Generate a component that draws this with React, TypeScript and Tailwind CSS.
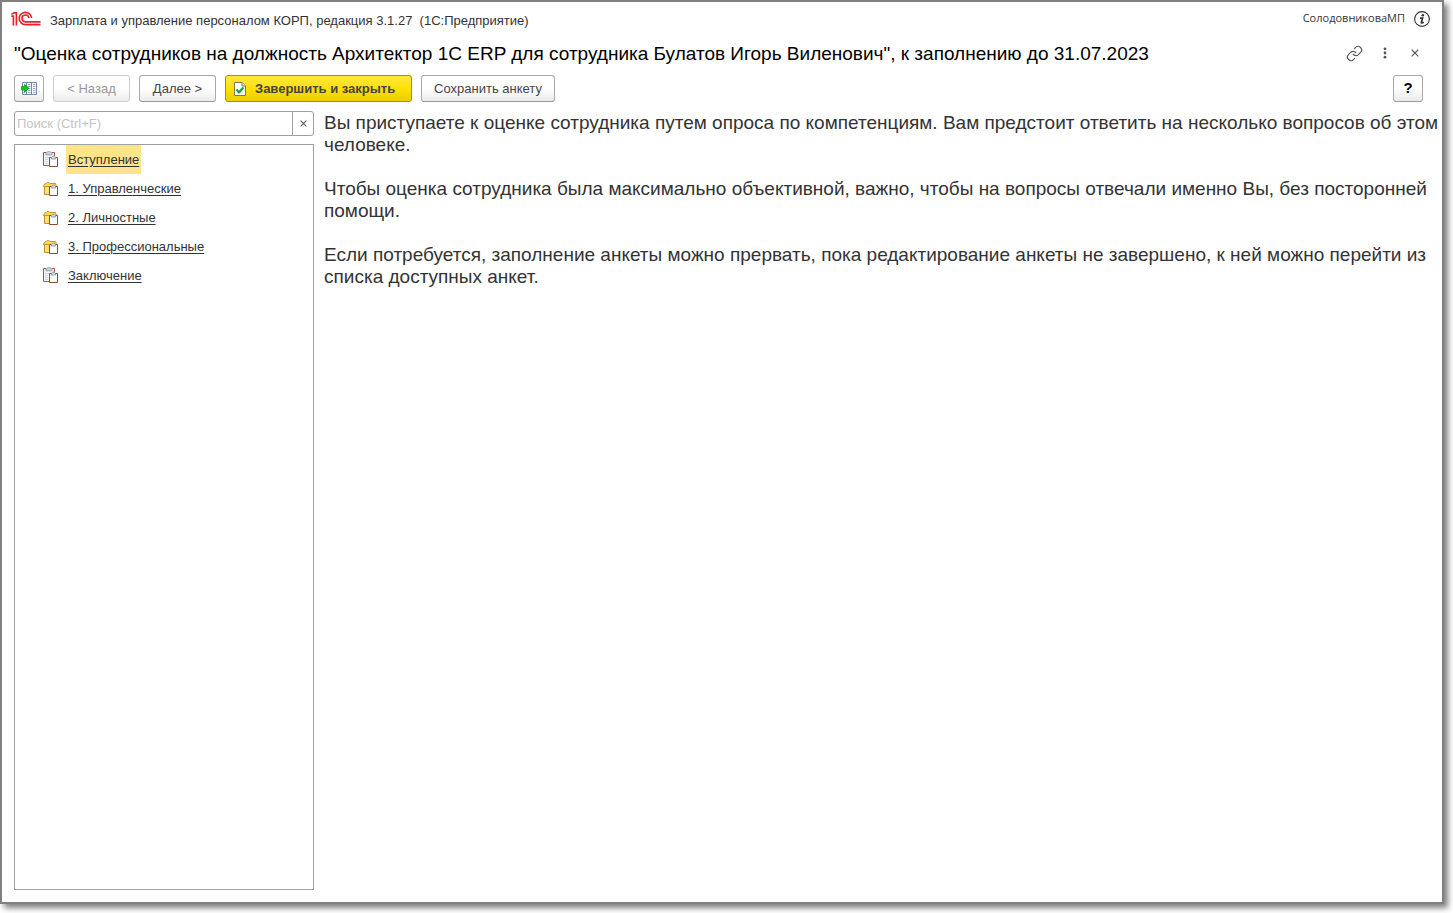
import React, { useState } from 'react';
import { Link } from 'lucide-react';

type SectionKind = 'page' | 'folder';

interface Section {
  id: string;
  title: string;
  kind: SectionKind;
}

const SECTIONS: Section[] = [
  { id: 'intro', title: 'Вступление', kind: 'page' },
  { id: 'management', title: '1. Управленческие', kind: 'folder' },
  { id: 'personal', title: '2. Личностные', kind: 'folder' },
  { id: 'professional', title: '3. Профессиональные', kind: 'folder' },
  { id: 'outro', title: 'Заключение', kind: 'page' },
];

const INTRO = [
  'Вы приступаете к оценке сотрудника путем опроса по компетенциям. Вам предстоит ответить на несколько вопросов об этом человеке.',
  'Чтобы оценка сотрудника была максимально объективной, важно, чтобы на вопросы отвечали именно Вы, без посторонней помощи.',
  'Если потребуется, заполнение анкеты можно прервать, пока редактирование анкеты не завершено, к ней можно перейти из списка доступных анкет.',
];

const Logo = () => (
  <svg width="30" height="16" viewBox="0 0 30 16" fill="none" stroke="#e8212b" strokeWidth="1.7">
    <path d="M0.4 5.2 H2.4 V14.6" />
    <path d="M0.4 3.4 L3 1.8 H5.4 V14.6" />
    <path d="M20.6 7 A6.2 6.2 0 1 0 14.4 13.7 H29.5" />
    <path d="M17.8 7 A3.4 3.4 0 1 0 14.4 10.8 H29.5" />
  </svg>
);

const InfoIcon = () => (
  <svg width="16" height="16" viewBox="0 0 16 16" fill="none" stroke="#333">
    <circle cx="8" cy="8" r="7.4" strokeWidth="1.1" />
    <circle cx="8.8" cy="4.3" r="1.3" fill="#333" stroke="none" />
    <path d="M6 7.2 H8.6 L7.3 11.6 Q7.3 12.3 9.8 11.2" strokeWidth="1.7" />
  </svg>
);

const MoreIcon = () => (
  <svg width="4" height="12" viewBox="0 0 4 12" fill="#555">
    <circle cx="2" cy="1.8" r="1.4" />
    <circle cx="2" cy="6" r="1.4" />
    <circle cx="2" cy="10.2" r="1.4" />
  </svg>
);

const CrossIcon = ({ size }: { size: number }) => (
  <svg width={size} height={size} viewBox="0 0 8 8" fill="none" stroke="#555" strokeWidth="1.2">
    <path d="M0.7 0.7 L7.3 7.3 M7.3 0.7 L0.7 7.3" />
  </svg>
);

const PanelIcon = () => (
  <svg width="16" height="13" viewBox="0 0 16 13" fill="none">
    <path d="M1.5 0.5 H15.5 V12.5 H1.5 Z" fill="#fff" stroke="#7389ab" />
    <path d="M5.5 0.5 V12.5 M10.5 0.5 V12.5" stroke="#7389ab" />
    <path d="M7 2.5 H9.5 M7 4.5 H9.5 M7 6.5 H9.5 M7 8.5 H9.5 M7 10.5 H9.5 M12 2.5 H14.5 M12 4.5 H14.5 M12 6.5 H14.5 M12 8.5 H14.5 M12 10.5 H14.5 M2.5 10.5 H4.5" stroke="#9aaac4" />
    <path d="M0.4 4.5 H3.5 V2.3 L8 6.2 L3.5 10.2 V8 H0.4 Z" fill="#14c814" stroke="#108a10" strokeWidth="0.7" />
  </svg>
);

const DoneIcon = () => (
  <svg width="12" height="15" viewBox="0 0 12 15" fill="none">
    <path d="M0.5 1.5 H8 L11.5 5 V14.5 H0.5 Z" fill="#fff" stroke="#77775c" />
    <path d="M8 1.5 V5 H11.5" fill="#e8e8e8" stroke="#77775c" />
    <path d="M2.5 8.5 L5 11.3 L9.5 6.5" stroke="#18a83c" strokeWidth="2.4" />
  </svg>
);

const PageIcon = () => (
  <svg width="16" height="17" viewBox="0 0 16 17" fill="none">
    <path d="M0.5 1.5 H11.5 V14.5 H0.5 Z" fill="#f4f5f8" />
    <path d="M0.5 14.5 V1.5 H3 M9 1.5 H11.5 V5" stroke="#a0503e" />
    <path d="M0.5 14.5 H6" stroke="#8a6a68" />
    <path d="M3 3.8 V2.2 L4.8 0.8 H7.2 L9 2.2 V3.8 Z" fill="#d5dce6" stroke="#7d8a9c" strokeWidth="0.8" />
    <path d="M2 6.5 H6 M2 8.5 H5 M2 10.5 H5 M2 12.5 H5" stroke="#d0d4da" />
    <path d="M6.5 6.5 H14.5 V15.5 H6.5 Z" fill="#fff" stroke="#8f4a2c" strokeLinejoin="round" />
    <path d="M8.4 8 V6.5 L9.6 5.2 H11.4 L12.6 6.5 V8 Z" fill="#d5dce6" stroke="#7d8a9c" strokeWidth="0.8" />
  </svg>
);

const FolderIcon = () => (
  <svg width="16" height="17" viewBox="0 0 16 17" fill="none">
    <path d="M1.5 6 H9 V14.5 H1.5 Z" fill="#ffe070" stroke="#c08c2c" />
    <path d="M0.5 6.5 L1.5 4 L3 3.5 Q3.5 2.5 5 2.5 Q6.5 2.5 7 3.5 H12.5 L13.5 6.5 Z" fill="#ffd65c" stroke="#c8963a" />
    <path d="M6.5 6.5 H14.5 V15.5 H6.5 Z" fill="#fff" stroke="#8f4a2c" strokeLinejoin="round" />
    <path d="M8.4 8 V6.5 L9.6 5.2 H11.4 L12.6 6.5 V8 Z" fill="#d5dce6" stroke="#7d8a9c" strokeWidth="0.8" />
  </svg>
);

const BUTTON =
  'flex h-[27px] items-center justify-center rounded-[3px] border border-[#aaa] border-b-[#999] bg-linear-to-b from-white from-50% to-[#ebebeb] text-[#444] disabled:border-[#ccc] disabled:text-[#999]';

export default function App() {
  const [active, setActive] = useState('intro');
  const [query, setQuery] = useState('');

  return (
    <div className="flex min-h-screen bg-white pr-[9px] pb-[9px] font-['Liberation_Sans',Arial,sans-serif] text-[13px] text-[#333]">
      <div className="flex min-w-0 flex-1 flex-col border-2 border-[#808080] bg-white shadow-[4px_4px_6px_#808080]">
        <header className="flex h-[34px] items-center pr-3 pl-[9px]">
          <Logo />
          <span className="ml-[9px] pt-1 whitespace-pre">Зарплата и управление персоналом КОРП, редакция 3.1.27  (1С:Предприятие)</span>
          <span className="ml-auto pb-[2px] font-['Open_Sans',sans-serif] text-[11px]">СолодовниковаМП</span>
          <button type="button" aria-label="О программе" className="ml-[9px]"><InfoIcon /></button>
        </header>

        <div className="flex h-[34px] items-center pr-[23px] pl-3">
          <h1 className="pt-[2px] text-[19px] text-black">"Оценка сотрудников на должность Архитектор 1С ERP для сотрудника Булатов Игорь Виленович", к заполнению до 31.07.2023</h1>
          <div className="ml-auto flex items-center">
            <button type="button" aria-label="Получить ссылку"><Link size={17} strokeWidth={1.6} color="#555" /></button>
            <button type="button" aria-label="Ещё" className="ml-5"><MoreIcon /></button>
            <button type="button" aria-label="Закрыть" className="ml-6"><CrossIcon size={8} /></button>
          </div>
        </div>

        <div className="flex gap-[9px] pt-[5px] pr-[19px] pl-3">
          <button type="button" aria-label="Разделы анкеты" className={`${BUTTON} w-[30px]`}><PanelIcon /></button>
          <button type="button" disabled className={`${BUTTON} w-[77px]`}>&lt; Назад</button>
          <button type="button" className={`${BUTTON} w-[77px]`}>Далее &gt;</button>
          <button type="button" className="flex h-[27px] w-[187px] items-center gap-[9px] rounded-[3px] border border-[#a89400] bg-linear-to-b from-[#ffe838] via-[#ffe100] to-[#ebce00] pl-2 font-bold text-[#444]">
            <DoneIcon />
            Завершить и закрыть
          </button>
          <button type="button" className={`${BUTTON} w-[134px]`}>Сохранить анкету</button>
          <button type="button" className={`${BUTTON} ml-auto w-[30px] text-[15px] font-bold text-black`}>?</button>
        </div>

        <div className="flex flex-1 gap-[10px] pt-[9px] pr-[2px] pb-3 pl-3">
          <aside className="flex w-[300px] shrink-0 flex-col gap-2">
            <div className="flex h-[25px] rounded-[3px] border border-[#a0a0a0]">
              <input
                type="text"
                aria-label="Поиск"
                value={query}
                onChange={(e) => setQuery(e.target.value)}
                placeholder="Поиск (Ctrl+F)"
                className="min-w-0 flex-1 px-[2px] outline-none placeholder:text-[#c4c4c4]"
              />
              <button type="button" aria-label="Очистить" onClick={() => setQuery('')} className="flex w-[21px] items-center justify-center border-l border-[#a0a0a0]">
                <CrossIcon size={7} />
              </button>
            </div>

            <nav className="flex-1 border border-[#a0a0a0]">
              {SECTIONS.map((section) => (
                <div key={section.id} className="flex h-[29px] items-center pl-7">
                  {section.kind === 'page' ? <PageIcon /> : <FolderIcon />}
                  <a
                    href={`#${section.id}`}
                    onClick={() => setActive(section.id)}
                    className={`ml-[7px] flex h-full items-center px-[2px] underline underline-offset-2 ${active === section.id ? 'bg-[#ffe48c]' : ''}`}
                  >
                    {section.title}
                  </a>
                </div>
              ))}
            </nav>
          </aside>

          <main className="flex min-w-0 flex-1 flex-col gap-[22px] pt-px text-[19px] leading-[22px]">
            {INTRO.map((text) => (
              <p key={text}>{text}</p>
            ))}
          </main>
        </div>
      </div>
    </div>
  );
}
